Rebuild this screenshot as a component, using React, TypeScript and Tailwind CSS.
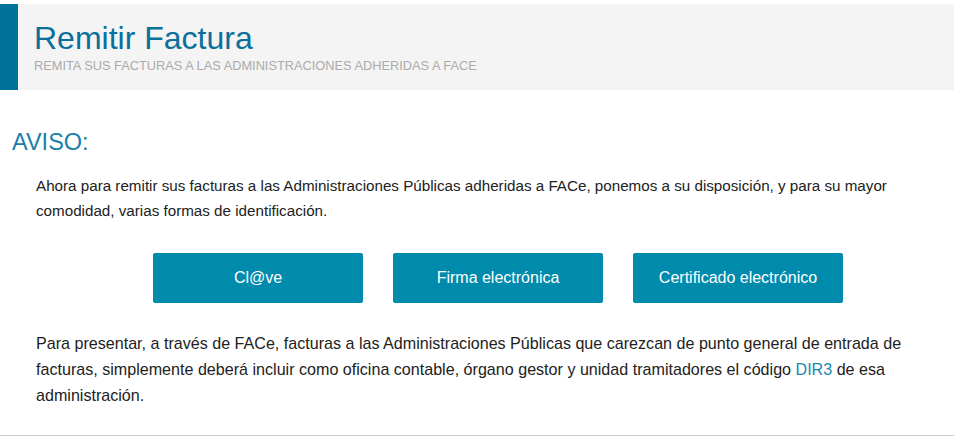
import React from 'react';

const methods = ['Cl@ve', 'Firma electrónica', 'Certificado electrónico'];

export default function App() {
    return (
        <div className="w-[954px] h-[437px] bg-white overflow-hidden font-['Liberation_Sans',Arial,sans-serif] text-[#222]">
            <div className="pt-[4px]">
                <div className="flex h-[86px] bg-[#f4f4f4]">
                    <div className="w-[18px] bg-[#00729c]"></div>
                    <div className="pl-[16px] pt-[15px]">
                        <h1 className="text-[32px] leading-[38px] text-[#0a6f9a]">Remitir Factura</h1>
                        <p className="text-[12.8px] leading-[18px] text-[#ababab] uppercase">
                            Remita sus facturas a las administraciones adheridas a FACE
                        </p>
                    </div>
                </div>
            </div>

            <div className="border-b border-[#cccccc] h-[346px]">
                <h2 className="pl-[12px] pt-[38px] text-[23.5px] leading-[28px] text-[#1a7fa8]">AVISO:</h2>

                <p className="pl-[36px] pr-[20px] mt-[17px] text-[15.2px] leading-[25px]">
                    Ahora para remitir sus facturas a las Administraciones Públicas adheridas a FACe, ponemos a su disposición, y para su mayor comodidad, varias formas de identificación.
                </p>

                <div className="flex justify-center gap-[30px] mt-[30px] pl-[42px]">
                    {methods.map((m) => (
                        <button
                            key={m}
                            className="w-[210px] h-[50px] rounded-[2px] bg-[#008aab] text-white text-[16px]"
                        >
                            {m}
                        </button>
                    ))}
                </div>

                <p className="pl-[36px] pr-[30px] mt-[27px] text-[16.1px] leading-[26px]">
                    Para presentar, a través de FACe, facturas a las Administraciones Públicas que carezcan de punto general de entrada de facturas, simplemente deberá incluir como oficina contable, órgano gestor y unidad tramitadores el código <span className="text-[#1a8ab0]">DIR3</span> de esa administración.
                </p>
            </div>
        </div>
    );
}
